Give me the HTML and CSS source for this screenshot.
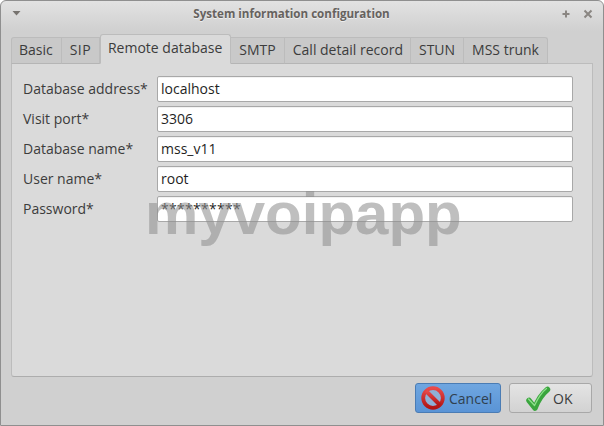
FILE: index.html
```html
<!DOCTYPE html>
<html lang="en">
<head>
<meta charset="utf-8">
<title>System information configuration</title>
<link rel="stylesheet" href="styles.css">
</head>
<body>
<div class="window">
  <header class="titlebar">
    <svg class="menu-icon" width="9" height="6" viewBox="0 0 9 6"><path d="M0.5 1h8L4.5 5.5z" fill="#77736f"/></svg>
    <span class="title">System information configuration</span>
    <div class="controls">
      <svg width="10" height="10" viewBox="0 0 10 10"><path d="M5 1.500v7M1.500 5h7" stroke="#8a8682" stroke-width="2"/></svg>
      <svg width="10" height="10" viewBox="0 0 10 10"><path d="M1.500 1.500l7 7M8.500 1.500l-7 7" stroke="#8a8682" stroke-width="2"/></svg>
    </div>
  </header>
  <nav class="tabs">
    <span class="tab tab-first">Basic</span>
    <span class="tab tab-sip">SIP</span>
    <span class="tab tab-active">Remote database</span>
    <span class="tab">SMTP</span>
    <span class="tab tab-cdr">Call detail record</span>
    <span class="tab">STUN</span>
    <span class="tab">MSS trunk</span>
  </nav>
  <main class="panel">
    <div class="row"><label class="label">Database address*</label><div class="field">localhost</div></div>
    <div class="row"><label class="label">Visit port*</label><div class="field">3306</div></div>
    <div class="row"><label class="label">Database name*</label><div class="field">mss_v11</div></div>
    <div class="row"><label class="label">User name*</label><div class="field">root</div></div>
    <div class="row"><label class="label">Password*</label><div class="field field-pass">**********</div></div>
    <div class="watermark">myvoipapp</div>
  </main>
  <footer class="actions">
    <button class="btn btn-focus">
      <svg width="30" height="30" viewBox="0 0 30 30"><defs><linearGradient id="r" x1="0" y1="0" x2="0" y2="1"><stop offset="0" stop-color="#e94a4a"/><stop offset="1" stop-color="#b01515"/></linearGradient></defs><circle cx="15" cy="15" r="9.800" fill="#8fb0d6" stroke="url(#r)" stroke-width="3.800"/><path d="M8 8l14 14" stroke="url(#r)" stroke-width="4"/></svg>
      <span>Cancel</span>
    </button>
    <button class="btn btn-ok">
      <svg width="30" height="30" viewBox="0 0 30 30"><path d="M7 17.500l6 7.500C16 17 20 11 25.500 6.500" fill="none" stroke="#3aa53e" stroke-width="5.500" stroke-linecap="round" stroke-linejoin="round"/><path d="M6.500 16l6 6.500C16 15 20 9 24.500 5.500" fill="none" stroke="#8fe08c" stroke-width="1.300" stroke-linecap="round" stroke-linejoin="round"/></svg>
      <span>OK</span>
    </button>
  </footer>
</div>
</body>
</html>
```
FILE: styles.css
```css
* { box-sizing: border-box; }
html, body { margin: 0; height: 100%; background: #fff; }
body { width: 604px; height: 426px; overflow: hidden; font-family: "Open Sans", "Noto Sans", sans-serif; font-size: 14px; color: #3c3c3c; }
.window {
  width: 604px; height: 426px; padding: 0 1px 1px;
  display: flex; flex-direction: column;
  border: 1px solid #8f8f8f;
  border-radius: 6px 6px 0 0;
  background: linear-gradient(#e2e2e2 0, #d0d0d0 30px, #d0d0d0 100%);
}
.titlebar { height: 31px; flex: none; display: flex; align-items: center; justify-content: center; position: relative; padding-right: 21px; }
.title { font-size: 11.6px; font-weight: 700; color: #66625e; text-shadow: 0 1px 0 #eee; position: relative; top: -3px; }
.menu-icon { position: absolute; left: 10px; top: 9px; }
.controls { position: absolute; right: 9px; top: 8px; display: flex; gap: 12px; }
.tabs { flex: none; height: 32px; display: flex; align-items: flex-end; padding-left: 9px; margin-bottom: -1px; position: relative; z-index: 1; }
.tab {
  height: 27px; padding: 0 8px 3px; display: flex; align-items: center;
  background: #c9c9c9; border: 1px solid #bcbcbc; border-left-width: 0; border-bottom-color: #b5b5b5;
  color: #3c3c3c;
}
.tab-first { border-left-width: 1px; border-radius: 3px 0 0 0; padding: 0 8px 3px 7px; }
.tab-sip { letter-spacing: .4px; }
.tab-cdr { padding-right: 7px; }
.tab:last-child { border-radius: 0 3px 0 0; }
.tab-active { height: 30px; background: #dadada; border-color: #bcbcbc #bcbcbc #dadada; border-left-width: 1px; border-radius: 3px 3px 0 0; padding: 0 8px 4px 7px; }
.panel {
  width: 582px; height: 314px; margin-left: 9px; flex: none; padding: 12px 19px 0 11px;
  background: #dadada; border: 1px solid #bcbcbc; border-bottom-color: #adadad; border-radius: 0 0 3px 3px;
  display: flex; flex-direction: column; gap: 4px; position: relative;
}
.row { display: flex; align-items: center; height: 26px; }
.label { width: 134px; flex: none; color: #3c3c3c; margin-bottom: 2px; }
.field {
  flex: 1; height: 26px; padding: 0 3px; line-height: 23px; color: #1f1f1f;
  background: #fff; border: 1px solid #a8a8a8; border-radius: 2px; box-shadow: inset 0 1px 0 #f2f2f2;
}
.field-pass { letter-spacing: .3px; }
.watermark {
  position: absolute; left: 133px; top: 115px;
  font-family: "Liberation Sans", Arial, sans-serif; font-size: 60px; font-weight: 700; line-height: 70px;
  color: rgba(140, 140, 140, .56); white-space: nowrap; pointer-events: none;
}
.actions { flex: 1; display: flex; justify-content: flex-end; align-items: flex-start; gap: 8px; padding: 6px 10px 0 0; }
.btn {
  height: 30px; display: flex; align-items: center; gap: 1px;
  font: inherit; color: #3c3c3c; padding: 0 0 0 2px;
  background: linear-gradient(#e4e4e4, #d2d2d2); border: 1px solid #a8a8a8; border-radius: 3px; width: 83px;
}
.btn svg { flex: none; width: 30px; height: 30px; margin: -2px 0; }
.btn-ok { padding-left: 12px; }
.btn-focus { width: 86px; background: linear-gradient(#6fa6e0, #5a94d6); border-color: #4a7cb4; color: #30404f; }
```
